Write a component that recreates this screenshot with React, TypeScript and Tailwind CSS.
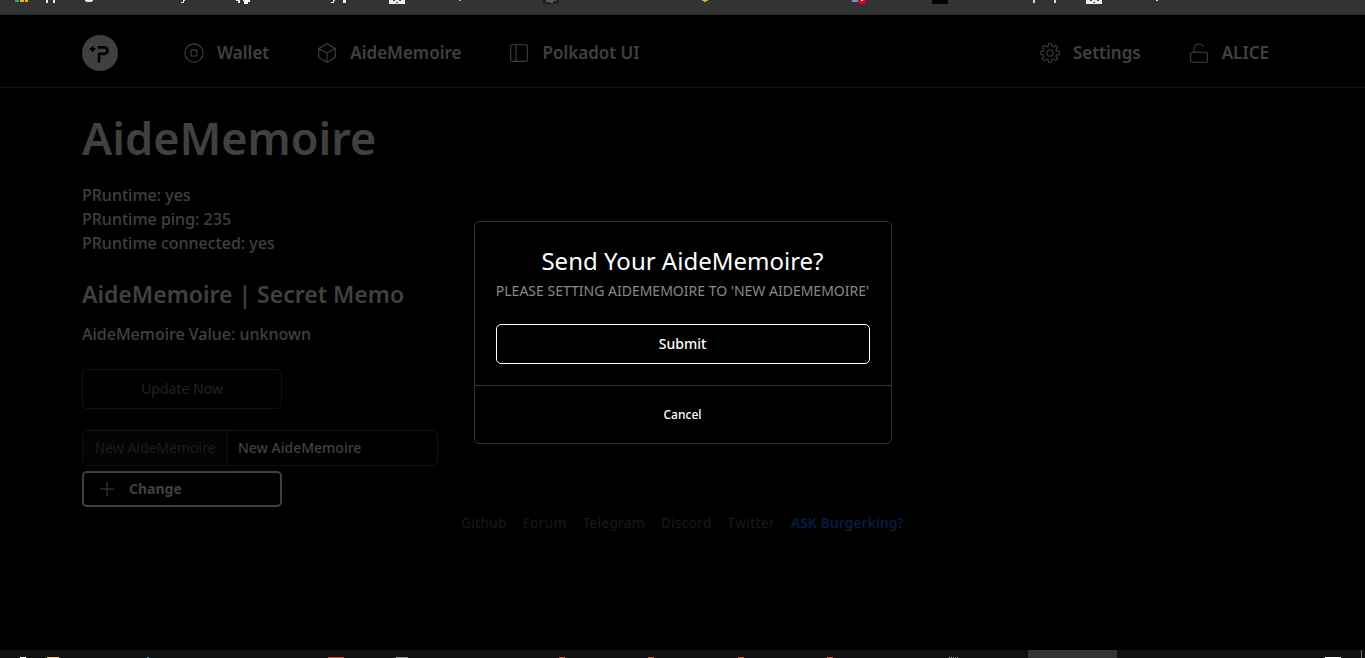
import React from "react";

type IconProps = { children: React.ReactNode };

function Icon({ children }: IconProps) {
  return (
    <svg viewBox="0 0 24 24" className="size-5 shrink-0" fill="none" stroke="currentColor" strokeWidth="1.3" strokeLinecap="round" strokeLinejoin="round" aria-hidden="true">
      {children}
    </svg>
  );
}

function gearPath() {
  const points: string[] = [];
  for (let i = 0; i <= 160; i++) {
    const a = (i / 160) * Math.PI * 2;
    const r = 9.9 + 1.8 * Math.tanh(2 * Math.cos(8 * a));
    points.push(`${(12 + r * Math.sin(a)).toFixed(2)} ${(12 - r * Math.cos(a)).toFixed(2)}`);
  }
  return `M${points.join("L")}Z`;
}

function BookmarkStrip() {
  return (
    <div className="h-[15px] overflow-hidden border-b border-[#272727] bg-[#333333]">
      <svg width="1365" height="14" shapeRendering="crispEdges" aria-hidden="true">
        <path d="M15 0h4v2h-4z" fill="#2fa35a" />
        <path d="M20 0h4v2h-4zM25 0h3v2h-3z" fill="#f5b50f" />
        <path d="M46 0h2v3h-2zM53 0h2v3h-2z" fill="#e8e8e8" />
        <path d="M85 0h8v1h-1v1h-6v-1h-1z" fill="#e6e6f5" />
        <path d="M183 0h2v1h-1v2h-3v-1h2zM333 0h2v1h-1v2h-3v-1h2zM343 0h3v3h-3z" fill="#e8e8e8" />
        <path d="M236 0h4v3h-2v-2h-2zM243 0h7v2h-2v2h-4v-3h-1z" fill="#f4f4f4" />
        <path d="M389 0h16v4h-16zM1086 0h16v4h-16z" fill="#eeeeee" />
        <path d="M393 0h2v1h-2zM399 0h2v1h-2zM396 2h2v1h-2zM1090 0h2v1h-2zM1097 0h2v1h-2zM1093 2h2v1h-2z" fill="#444444" />
        <path d="M459 0h2v1h-2z" fill="#e3bd51" />
        <path d="M543 0h16v4h-16z" fill="#231f20" />
        <path d="M546 0h10v1h-3v2h-3v-1h-4z" fill="#5a5a5a" />
        <path d="M702 0h6v1h-2v1h-2v-1h-2z" fill="#e5a82c" />
        <path d="M852 0h7v2h-7z" fill="#7289da" />
        <path d="M858 0h8v2h-1v2h-6v-2h-1z" fill="#e60012" />
        <path d="M861 0h2v1h-2z" fill="#ffffff" />
        <path d="M932 0h16v4h-16z" fill="#000000" />
        <path d="M1033 0h2v3h-2zM1054 0h2v3h-2zM1156 0h2v1h-2z" fill="#d8d8d8" />
      </svg>
    </div>
  );
}

function TaskStrip() {
  return (
    <div className="h-2 overflow-hidden bg-[#101010]">
      <svg width="1365" height="8" shapeRendering="crispEdges" aria-hidden="true">
        <path d="M1028 0h89v8h-89z" fill="#333333" />
        <path d="M1361 0h1v8h-1z" fill="#6b6b6b" />
        <path d="M20 7h6v1h-6zM1325 7h16v1h-16z" fill="#ffffff" />
        <path d="M47 7h12v1h-12z" fill="#f1c75b" />
        <path d="M147 7h2v1h-2z" fill="#28a8c8" />
        <path d="M328 7h16v1h-16zM559 7h6v1h-6zM648 7h6v1h-6zM738 7h6v1h-6zM827 7h6v1h-6z" fill="#d4533a" />
        <path d="M396 7h12v1h-12z" fill="#999999" />
        <path d="M949 7h1v1h-1zM951 7h1v1h-1zM953 7h1v1h-1zM955 7h1v1h-1zM957 7h1v1h-1z" fill="#999999" />
      </svg>
    </div>
  );
}

function Logo() {
  return (
    <svg viewBox="0 0 36 36" className="size-9" aria-hidden="true">
      <circle cx="18" cy="18" r="18" fill="#404040" />
      <path d="M17 12.400h5.500a3 3.200 0 0 1 0 6.400h-5.500v7.800" fill="none" stroke="#000" strokeWidth="2.7" strokeLinecap="round" strokeLinejoin="round" />
      <path d="M10.500 11.200v5.600M7.700 14h5.600" stroke="#000" strokeWidth="2" />
    </svg>
  );
}

const navItem = "flex items-center gap-[13px]";

export default function App() {
  return (
    <div className="flex min-h-screen flex-col bg-black font-['Noto_Sans','Open_Sans',sans-serif] text-base text-[#404040]">
      <BookmarkStrip />
      <header className="border-b border-[#111111]">
        <nav className="mx-auto flex h-[72px] max-w-[1201px] items-center pt-[3px] pr-[14px] text-[17px] font-semibold">
          <a href="#home" aria-label="Home" className="mr-[66px]"><Logo /></a>
          <div className="flex gap-12">
            <a href="#wallet" className={navItem}>
              <Icon><circle cx="12" cy="12" r="11" /><rect x="8.5" y="8.5" width="7" height="7" rx="0.5" /></Icon>
              Wallet
            </a>
            <a href="#aidememoire" className={navItem}>
              <Icon><path d="M12 1 22 6.500V17.500L12 23 2 17.500V6.500ZM2 6.500 12 12 22 6.500M12 12V23" /></Icon>
              AideMemoire
            </a>
            <a href="#polkadot" className={navItem}>
              <Icon><rect x="2" y="2" width="20" height="20" rx="1.500" /><path d="M8.500 2v20" /></Icon>
              Polkadot UI
            </a>
          </div>
          <div className="ml-auto flex gap-12">
            <a href="#settings" className={navItem}>
              <Icon><path d={gearPath()} /><circle cx="12" cy="12" r="3.700" /></Icon>
              Settings
            </a>
            <a href="#account" className={navItem}>
              <Icon><rect x="2" y="11" width="20" height="12" rx="1.500" /><path d="M6 11V7a6 6 0 0 1 11-3" /></Icon>
              ALICE
            </a>
          </div>
        </nav>
      </header>

      <main className="mx-auto w-full max-w-[1201px] grow pt-[14px]">
        <h1 className="text-[45px] leading-[72px] font-semibold">AideMemoire</h1>
        <div className="mt-[9px] leading-6 font-medium">
          <p>PRuntime: yes</p>
          <p>PRuntime ping: 235</p>
          <p>PRuntime connected: yes</p>
        </div>
        <h2 className="mt-[21px] text-[23px] leading-9 font-semibold">AideMemoire | Secret Memo</h2>
        <p className="mt-[10px] leading-6 font-medium">AideMemoire Value: unknown</p>
        <button type="button" className="mt-[23px] block h-10 w-[200px] rounded-[5px] border border-[#111111] text-sm text-[#222222]">Update Now</button>
        <div className="mt-[21px] flex h-9 w-[356px] rounded-[5px] border border-[#111111] text-sm">
          <label htmlFor="memo" className="flex w-[145px] shrink-0 items-center justify-center border-r border-[#111111] bg-[#040404] whitespace-nowrap text-[#1c1c1c]">New AideMemoire</label>
          <input id="memo" type="text" defaultValue="New AideMemoire" className="min-w-0 grow px-[10px] font-medium outline-none" />
        </div>
        <button type="button" className="mt-[5px] flex h-9 w-[200px] items-center gap-3 rounded-[5px] border-2 border-[#404040] pl-[13px] text-sm font-bold">
          <Icon><path d="M12 4v16M4 12h16" /></Icon>
          Change
        </button>
        <footer className="mt-[6px] flex justify-center gap-4 text-sm font-medium text-[#161616]">
          <a href="#github">Github</a>
          <a href="#forum">Forum</a>
          <a href="#telegram">Telegram</a>
          <a href="#discord">Discord</a>
          <a href="#twitter">Twitter</a>
          <a href="#ask" className="font-semibold text-[#061c40]">ASK Burgerking?</a>
        </footer>
      </main>
      <TaskStrip />

      <div className="fixed inset-0 flex items-center justify-center pt-[7px]">
        <section role="dialog" aria-modal="true" aria-labelledby="dialog-title" className="w-[418px] rounded-[5px] border border-[#333333] bg-black text-center text-white">
          <div className="p-[21px]">
            <h2 id="dialog-title" className="text-2xl leading-9">Send Your AideMemoire?</h2>
            <p className="text-sm leading-6 whitespace-nowrap text-[#888888]">PLEASE SETTING AIDEMEMOIRE TO 'NEW AIDEMEMOIRE'</p>
            <button type="button" className="mt-[21px] block h-10 w-full rounded-[5px] border border-white text-sm font-medium">Submit</button>
          </div>
          <button type="button" className="block h-[58px] w-full border-t border-[#333333] text-xs font-medium">Cancel</button>
        </section>
      </div>
    </div>
  );
}
